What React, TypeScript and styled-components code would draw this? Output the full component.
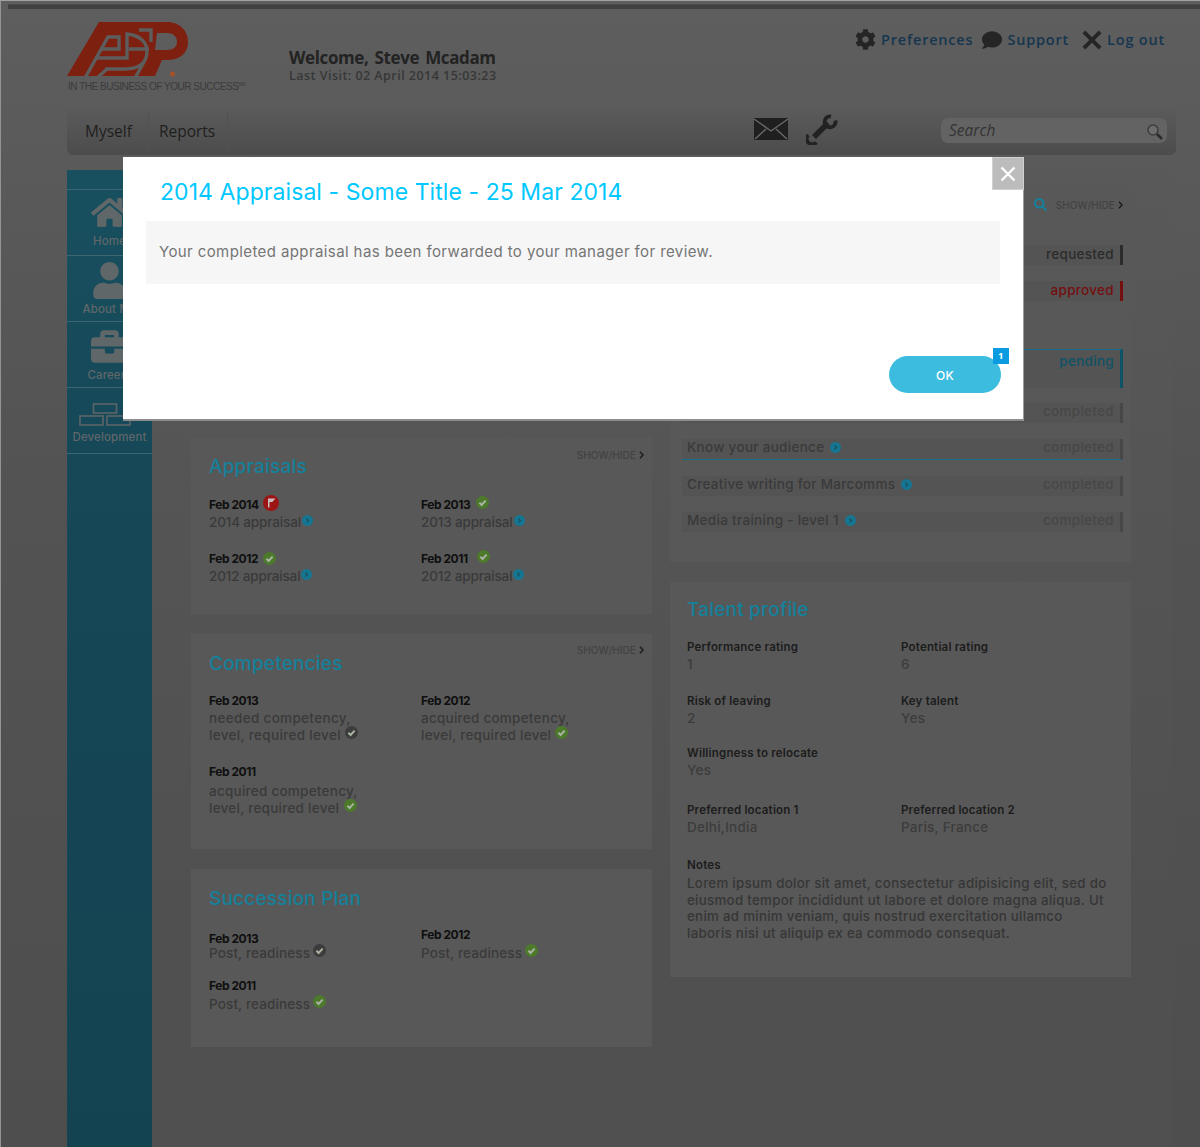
import React from "react";
import styled, { createGlobalStyle } from "styled-components";
import { FaBriefcase, FaCog, FaComment, FaHome, FaSearch, FaUser } from "react-icons/fa";

const GlobalStyle = createGlobalStyle`
  html, body { margin: 0; padding: 0; background: #555; }
  * { box-sizing: border-box; }
  body { font-family: Inter, "Open Sans", "Liberation Sans", sans-serif; }
`;

const Page = styled.div`
  position: relative;
  width: 1200px;
  height: 1147px;
  overflow: hidden;
  display: flex;
  flex-direction: column;
  border-left: 1px solid #949494;
  border-top: 1px solid #a2a2a2;
  background: linear-gradient(#5e5e5e 0, #5a5a5a 160px, #535353 480px, #4e4e4e 1147px);
`;
const TopStrip = styled.div`
  height: 5px;
  margin: 3px 0 0 7px;
  background: #414141;
  border-top: 1px solid #4c4c4c;
  flex: none;
`;
const Header = styled.header`
  height: 98px;
  flex: none;
  display: flex;
  padding-left: 66px;
`;
const LogoBlock = styled.div`
  width: 222px;
  padding-top: 13px;
  flex: none;
`;
const Tagline = styled.div`
  font: 10px/11px "Liberation Sans", sans-serif;
  letter-spacing: -0.48px;
  color: #3b3b3b;
  margin: 3px 0 0 1px;
  white-space: nowrap;
  sup { font-size: 5px; line-height: 0; }
`;
const Welcome = styled.div`
  padding-top: 38px;
  font-family: "Open Sans", sans-serif;
  white-space: nowrap;
`;
const WelcomeName = styled.div`
  font-size: 17px;
  line-height: 21px;
  font-weight: 700;
  color: #232323;
  letter-spacing: -0.38px;
  word-spacing: 2px;
`;
const LastVisit = styled.div`
  font-size: 12.5px;
  line-height: 15px;
  font-weight: 600;
  color: #373737;
  letter-spacing: 0.47px;
`;
const TopLinks = styled.nav`
  margin-left: auto;
  margin-right: 35px;
  padding-top: 17px;
  display: flex;
  height: 44px;
  align-items: center;
  gap: 9px;
`;
const TopLink = styled.a<{ $ml?: number }>`
  display: flex;
  align-items: center;
  gap: 5px;
  margin-left: ${(p) => p.$ml ?? 0}px;
  font: 600 14.5px/20px "Open Sans", sans-serif;
  letter-spacing: 0.8px;
  color: #16364f;
  svg { color: #252525; flex: none; }
`;
const NavBar = styled.div`
  flex: none;
  width: 1109px;
  height: 48px;
  margin-left: 66px;
  display: flex;
  align-items: center;
  border-radius: 6px;
  background: linear-gradient(#5b5b5b, #4c4c4c);
`;
const NavTab = styled.a<{ $wide?: boolean }>`
  height: 40px;
  display: flex;
  align-items: center;
  padding-left: ${(p) => (p.$wide ? "10px" : "18px")};
  padding-right: ${(p) => (p.$wide ? "12px" : "16px")};
  border-right: 1px solid #525252;
  font: 400 15.5px/20px "Open Sans", sans-serif;
  color: #1f1f1f;
`;
const NavIcons = styled.div`
  margin-left: 526px;
  margin-top: -4px;
  display: flex;
  align-items: center;
  gap: 18px;
`;
const SearchBox = styled.div`
  width: 226px;
  height: 25px;
  margin-left: auto;
  margin-right: 9px;
  margin-top: -2px;
  border-radius: 7px;
  background: #636363;
  display: flex;
  align-items: center;
  justify-content: space-between;
  padding: 0 3px 0 8px;
  font: italic 400 15.5px/20px "Open Sans", sans-serif;
  color: #333;
  svg { margin-top: 4px; }
`;
const Body = styled.div`
  flex: 1;
  display: flex;
  margin: 15px 0 0 66px;
  min-height: 0;
`;
const Sidebar = styled.aside`
  width: 85px;
  flex: none;
  padding-top: 19px;
  background: linear-gradient(#18505f 0, #164858 284px, #144250 1000px);
`;
const SideItem = styled.a<{ $pb: number }>`
  height: 66px;
  border-top: 1px solid #3c6670;
  display: flex;
  flex-direction: column;
  align-items: center;
  justify-content: flex-end;
  padding-bottom: ${(p) => p.$pb}px;
  color: #5f6769;
  font-size: 11.5px;
  line-height: 14px;
  font-weight: 500;
  letter-spacing: 0.1px;
  white-space: nowrap;
  &:last-child { border-bottom: 1px solid #3c6670; height: 67px; }
  svg { margin-bottom: 3px; }
`;
const Content = styled.main`
  width: 1020px;
  flex: none;
  border-radius: 6px 6px 0 0;
  padding: 19px 0 0 39px;
  display: grid;
  grid-template-columns: 461px 461px;
  column-gap: 18px;
  align-content: start;
  background: linear-gradient(#595959 0, #555 300px, #505050 760px);
`;
const Column = styled.div`
  display: flex;
  flex-direction: column;
  gap: 20px;
`;
const Card = styled.section<{ $h: number }>`
  height: ${(p) => p.$h}px;
  background: #585858;
  padding: 8px 8px 0 18px;
`;
const CardHead = styled.div`
  display: flex;
  justify-content: space-between;
  align-items: flex-start;
  min-height: 42px;
`;
const CardTitle = styled.h2`
  margin: 10px 0 0;
  font-size: 19px;
  line-height: 23px;
  font-weight: 500;
  color: #14809a;
  letter-spacing: 0.2px;
`;
const ShowHide = styled.span<{ $top?: number }>`
  font-size: 10px;
  line-height: 14px;
  font-weight: 500;
  letter-spacing: 0.08px;
  color: #424242;
  display: flex;
  align-items: center;
  gap: 3px;
  margin-top: ${(p) => p.$top ?? 3}px;
`;
const Pairs = styled.div<{ $gap: number; $top?: number }>`
  display: grid;
  grid-template-columns: 212px 212px;
  row-gap: ${(p) => p.$gap}px;
  margin-top: ${(p) => p.$top ?? 0}px;
  align-items: start;
`;
const Entry = styled.div<{ $top?: number }>`
  margin-top: ${(p) => p.$top ?? 0}px;
`;
const DateRow = styled.div<{ $mb?: number; $gap?: number; $lift?: number }>`
  display: flex;
  align-items: center;
  gap: ${(p) => p.$gap ?? 5}px;
  height: 17px;
  margin-bottom: ${(p) => p.$mb ?? 1}px;
  font-size: 12px;
  font-weight: 650;
  letter-spacing: -0.45px;
  color: #0f0f0f;
  svg { margin-bottom: ${(p) => p.$lift ?? 0}px; }
`;
const Desc = styled.div<{ $ls?: number; $icon?: number; $lh?: number }>`
  font-size: 13.5px;
  line-height: ${(p) => p.$lh ?? 16.5}px;
  font-weight: 450;
  color: #3a3a3a;
  letter-spacing: ${(p) => p.$ls ?? 0.13}px;
  white-space: nowrap;
  svg { vertical-align: 1px; margin-left: ${(p) => p.$icon ?? 3}px; }
`;
const ListCard = styled.section`
  height: 373px;
  background: #585858;
`;
const ListHead = styled.div`
  height: 56px;
  padding: 9px 8px 0 0;
  display: flex;
  justify-content: flex-end;
  align-items: flex-start;
  gap: 9px;
  color: #14809a;
`;
const RowGroup = styled.div<{ $top?: number }>`
  display: flex;
  flex-direction: column;
  gap: 16px;
  margin-top: ${(p) => p.$top ?? 0}px;
`;
const Row = styled.div<{ $tone: string; $tall?: boolean; $under?: boolean; $muted?: boolean }>`
  height: ${(p) => (p.$tall ? 39 : p.$under ? 21 : 20)}px;
  margin: 0 8px 0 12px;
  padding: 0 6px ${(p) => (p.$tall ? 0 : p.$muted ? 4 : 2)}px 5px;
  display: flex;
  justify-content: space-between;
  align-items: ${(p) => (p.$tall ? "flex-start" : "center")};
  background: #545454;
  font-size: 13.5px;
  line-height: 18px;
  font-weight: 450;
  letter-spacing: 0.3px;
  color: #3a3a3a;
  border-right: 3px solid ${(p) => p.$tone};
  ${(p) => (p.$tall ? "border-top: 1px solid #14708a; padding-top: 2px;" : "")}
  ${(p) => (p.$under ? "border-bottom: 1px solid #14708a;" : "")}
  b { font-weight: 500; color: ${(p) => p.$tone}; }
  svg { vertical-align: -1px; margin-left: 6px; }
`;
const ProfileCard = styled.section`
  height: 395px;
  background: #585858;
  padding: 16px 20px 0 17px;
`;
const ProfileTitle = styled(CardTitle)`
  margin: 0 0 18px;
`;
const Facts = styled.div`
  display: grid;
  grid-template-columns: 214px 214px;
`;
const Fact = styled.div<{ $h: number }>`
  height: ${(p) => p.$h}px;
`;
const FactLabel = styled.div`
  font-size: 11.5px;
  line-height: 17px;
  font-weight: 600;
  color: #1c1c1c;
  letter-spacing: 0.2px;
`;
const FactValue = styled.div`
  font-size: 13.5px;
  line-height: 17px;
  font-weight: 450;
  letter-spacing: 0.25px;
  color: #3c3c3c;
`;
const Notes = styled.p`
  margin: 1px 0 0;
  font-size: 13.3px;
  line-height: 16.7px;
  font-weight: 450;
  letter-spacing: 0.29px;
  color: #363636;
  width: 423px;
`;
const Modal = styled.div`
  position: absolute;
  left: 122px;
  top: 156px;
  width: 901px;
  height: 264px;
  padding: 20px 23px 0 23px;
  background: #fff;
  border-right: 1px solid #9c9c9c;
  border-bottom: 2px solid #8d8d8d;
  display: flex;
  flex-direction: column;
`;
const CloseButton = styled.button`
  position: absolute;
  top: 0;
  right: -1px;
  width: 32px;
  height: 33px;
  padding: 0;
  background: #bcbcbc;
  border: 1px solid #d0d0d0;
  display: flex;
  align-items: center;
  justify-content: center;
`;
const ModalTitle = styled.h1`
  margin: 0 0 14px 14px;
  font-size: 23px;
  line-height: 30px;
  font-weight: 400;
  letter-spacing: 0.07px;
  color: #00c8ff;
`;
const Message = styled.div`
  width: 854px;
  height: 63px;
  padding-left: 13px;
  display: flex;
  align-items: center;
  padding-bottom: 3px;
  background: #f6f6f6;
  font-size: 15px;
  letter-spacing: 0.4px;
  color: #757575;
`;
const ModalFooter = styled.div`
  display: flex;
  justify-content: flex-end;
  margin: 72px 0 0;
  width: 855px;
`;
const OkButton = styled.button`
  position: relative;
  width: 112px;
  height: 37px;
  border: 0;
  border-radius: 19px;
  background: #3cbde0;
  color: #fff;
  font: 500 12px/37px Inter, sans-serif;
  letter-spacing: 0.4px;
`;
const Counter = styled.span`
  position: absolute;
  top: -8px;
  right: -8px;
  width: 16px;
  height: 16px;
  background: #0a9be0;
  color: #fff;
  font: 700 9.5px/16px "Open Sans", sans-serif;
  text-align: center;
`;

const Check = ({ gray }: { gray?: boolean }) => (
  <svg width="13" height="13" viewBox="0 0 13 13">
    <circle cx="6.5" cy="6.5" r="6.5" fill={gray ? "#3c3c3c" : "#4c7a2a"} />
    <path d="M3.4 6.8l2.2 2.2 4-4.4" fill="none" stroke="#a9b3a3" strokeWidth="2" />
  </svg>
);
const Dot = () => (
  <svg width="11" height="11" viewBox="0 0 11 11">
    <circle cx="5.5" cy="5.5" r="5.5" fill="#167590" />
    <path d="M4.5 3.6l2 1.9-2 1.9" fill="none" stroke="#14505f" strokeWidth="1.3" />
  </svg>
);
const Flag = () => (
  <svg width="16" height="16" viewBox="0 0 16 16">
    <circle cx="8" cy="8" r="8" fill="#9c1414" />
    <path d="M5 3.5h7.5l-3 3.2 0 .3H6.5v5.5H5z" fill="#c9bcbc" />
  </svg>
);
const Chevron = () => (
  <svg width="5" height="8" viewBox="0 0 5 8">
    <path d="M1 .8l3 3.2-3 3.2" fill="none" stroke="#1e1e1e" strokeWidth="1.6" />
  </svg>
);
const AdpLogo = () => (
  <svg width="122" height="56" viewBox="0 0 122 56" style={{ display: "block" }}>
    <path d="M0 54 L32 0 H100 C113 0 121 9 121 20 C121 31 113 38 100 38 H95 L88 54 Z" fill="#7e2010" />
    <g fill="none" stroke="#5d5d5d" strokeWidth="3.4">
      <path d="M18 56 L41 15 H52 V27 H33" />
      <path d="M28 36 H60 V12 C72 13 80 20 80 29 C80 41 72 47 58 47 H38" />
      <path d="M40 47 L30 56 M68 56 L77 40" />
      <path d="M62 27 H82 M72 8 H84 V20" />
    </g>
    <path d="M90 11 H100 C107 11 110 15 110 20 C110 25 106 28 100 28 H88 Z" fill="#5d5d5d" />
    <circle cx="105.5" cy="52" r="2.5" fill="#a8502a" />
  </svg>
);
const Mail = () => (
  <svg width="34" height="22" viewBox="0 0 34 22">
    <rect width="34" height="22" fill="#1f1f1f" />
    <path d="M0 1l17 12L34 1M1 21l11-10M33 21L22 11" fill="none" stroke="#6c6c6c" strokeWidth="1.3" />
  </svg>
);
const Wrench = () => (
  <svg width="32" height="31" viewBox="0 0 32 31" fill="none" stroke="#222">
    <path d="M8 23 L22 9" strokeWidth="5.5" />
    <path d="M29.4 6.5 A 5.5 5.5 0 1 1 25 2.4" strokeWidth="3.8" />
    <path d="M2.2 21 A 5.2 5.2 0 1 0 10.4 28.4" strokeWidth="3.8" />
  </svg>
);
const Bricks = () => (
  <svg width="62" height="24" viewBox="0 0 62 24" fill="none" stroke="#5c6668" strokeWidth="1.6">
    <rect x="14.5" y="1" width="23" height="9" />
    <rect x="1" y="13" width="23" height="9" />
    <rect x="28" y="13" width="23" height="9" />
  </svg>
);
const Cross = ({ size, color, w }: { size: number; color: string; w: number }) => (
  <svg width={size} height={size} viewBox="0 0 16 16">
    <path d="M1.5 1.5l13 13M14.5 1.5l-13 13" stroke={color} strokeWidth={w} fill="none" />
  </svg>
);
const Lens = () => (
  <svg width="18" height="18" viewBox="0 0 18 18" fill="none">
    <circle cx="7" cy="7" r="5" stroke="#3e3e3e" strokeWidth="1.6" fill="#6d6d6d" />
    <path d="M11 11l5 5" stroke="#2b2b2b" strokeWidth="2.6" />
  </svg>
);

export default function App() {
  return (
    <Page>
      <GlobalStyle />
      <TopStrip />
      <Header>
        <LogoBlock>
          <AdpLogo />
          <Tagline>IN THE BUSINESS OF YOUR SUCCESS<sup>SM</sup></Tagline>
        </LogoBlock>
        <Welcome>
          <WelcomeName>Welcome, Steve Mcadam</WelcomeName>
          <LastVisit>Last Visit: 02 April 2014 15:03:23</LastVisit>
        </Welcome>
        <TopLinks>
          <TopLink><FaCog size={21} />Preferences</TopLink>
          <TopLink><FaComment size={20} />Support</TopLink>
          <TopLink $ml={4}><Cross size={20} color="#252525" w={3} />Log out</TopLink>
        </TopLinks>
      </Header>
      <NavBar>
        <NavTab>Myself</NavTab>
        <NavTab $wide>Reports</NavTab>
        <NavIcons><Mail /><Wrench /></NavIcons>
        <SearchBox>Search<Lens /></SearchBox>
      </NavBar>
      <Body>
        <Sidebar>
          <SideItem $pb={7}><FaHome size={37} />Home</SideItem>
          <SideItem $pb={5}><FaUser size={37} />About Me</SideItem>
          <SideItem $pb={5}><FaBriefcase size={37} />Careers</SideItem>
          <SideItem $pb={9}><Bricks />Development</SideItem>
        </Sidebar>
        <Content>
          <Column>
            <Card $h={228} />
            <Card $h={177}>
              <CardHead><CardTitle>Appraisals</CardTitle><ShowHide>SHOW/HIDE <Chevron /></ShowHide></CardHead>
              <Pairs $gap={19} $top={9}>
                <Entry><DateRow $gap={4} $lift={4}>Feb 2014 <Flag /></DateRow><Desc $ls={-0.15} $icon={1}>2014 appraisal<Dot /></Desc></Entry>
                <Entry><DateRow $gap={6} $lift={5}>Feb 2013 <Check /></DateRow><Desc $ls={-0.15} $icon={1}>2013 appraisal<Dot /></Desc></Entry>
                <Entry><DateRow>Feb 2012 <Check /></DateRow><Desc $ls={-0.15} $icon={1}>2012 appraisal<Dot /></Desc></Entry>
                <Entry><DateRow $gap={9} $lift={3}>Feb 2011 <Check /></DateRow><Desc $ls={-0.15} $icon={1}>2012 appraisal<Dot /></Desc></Entry>
              </Pairs>
            </Card>
            <Card $h={215}>
              <CardHead><CardTitle>Competencies</CardTitle><ShowHide $top={1}>SHOW/HIDE <Chevron /></ShowHide></CardHead>
              <Pairs $gap={20} $top={8}>
                <Entry><DateRow>Feb 2013</DateRow><Desc $ls={0.33} $icon={0} $lh={16}>needed competency,<br />level, required level <Check gray /></Desc></Entry>
                <Entry><DateRow>Feb 2012</DateRow><Desc $ls={0.25} $icon={0} $lh={16}>acquired competency,<br />level, required level <Check /></Desc></Entry>
                <Entry><DateRow $mb={3}>Feb 2011</DateRow><Desc $ls={0.25} $icon={1} $lh={16}>acquired competency,<br />level, required level <Check /></Desc></Entry>
              </Pairs>
            </Card>
            <Card $h={178}>
              <CardHead><CardTitle>Succession Plan</CardTitle></CardHead>
              <Pairs $gap={15} $top={7}>
                <Entry $top={4}><DateRow $mb={-3}>Feb 2013</DateRow><Desc $icon={-1}>Post, readiness <Check gray /></Desc></Entry>
                <Entry><DateRow>Feb 2012</DateRow><Desc $icon={-1}>Post, readiness <Check /></Desc></Entry>
                <Entry><DateRow>Feb 2011</DateRow><Desc $icon={-1}>Post, readiness <Check /></Desc></Entry>
              </Pairs>
            </Card>
          </Column>
          <Column>
            <ListCard>
              <ListHead><FaSearch size={13} /><ShowHide $top={0}>SHOW/HIDE <Chevron /></ShowHide></ListHead>
              <RowGroup>
                <Row $tone="#2b2b2b"><span /><b>requested</b></Row>
                <Row $tone="#741010"><span /><b>approved</b></Row>
              </RowGroup>
              <RowGroup $top={48}>
                <Row $tone="#0f5266" $tall><span /><b>pending</b></Row>
              </RowGroup>
              <RowGroup $top={15}>
                <Row $tone="#474747" $muted><span /><b>completed</b></Row>
                <Row $tone="#474747" $under $muted><span>Know your audience<Dot /></span><b>completed</b></Row>
                <Row $tone="#474747" $muted><span>Creative writing for Marcomms<Dot /></span><b>completed</b></Row>
                <Row $tone="#474747" $muted><span>Media training - level 1<Dot /></span><b>completed</b></Row>
              </RowGroup>
            </ListCard>
            <ProfileCard>
              <ProfileTitle>Talent profile</ProfileTitle>
              <Facts>
                <Fact $h={54}><FactLabel>Performance rating</FactLabel><FactValue>1</FactValue></Fact>
                <Fact $h={54}><FactLabel>Potential rating</FactLabel><FactValue>6</FactValue></Fact>
                <Fact $h={52}><FactLabel>Risk of leaving</FactLabel><FactValue>2</FactValue></Fact>
                <Fact $h={52}><FactLabel>Key talent</FactLabel><FactValue>Yes</FactValue></Fact>
                <Fact $h={57}><FactLabel>Willingness to relocate</FactLabel><FactValue>Yes</FactValue></Fact>
                <Fact $h={57} />
                <Fact $h={55}><FactLabel>Preferred location 1</FactLabel><FactValue>Delhi,India</FactValue></Fact>
                <Fact $h={55}><FactLabel>Preferred location 2</FactLabel><FactValue>Paris, France</FactValue></Fact>
              </Facts>
              <FactLabel>Notes</FactLabel>
              <Notes>Lorem ipsum dolor sit amet, consectetur adipisicing elit, sed do eiusmod tempor incididunt ut labore et dolore magna aliqua. Ut enim ad minim veniam, quis nostrud exercitation ullamco laboris nisi ut aliquip ex ea commodo consequat.</Notes>
            </ProfileCard>
          </Column>
        </Content>
      </Body>
      <Modal role="dialog">
        <CloseButton aria-label="Close"><Cross size={16} color="#fff" w={2.4} /></CloseButton>
        <ModalTitle>2014 Appraisal - Some Title - 25 Mar 2014</ModalTitle>
        <Message>Your completed appraisal has been forwarded to your manager for review.</Message>
        <ModalFooter>
          <OkButton>OK<Counter>1</Counter></OkButton>
        </ModalFooter>
      </Modal>
    </Page>
  );
}
